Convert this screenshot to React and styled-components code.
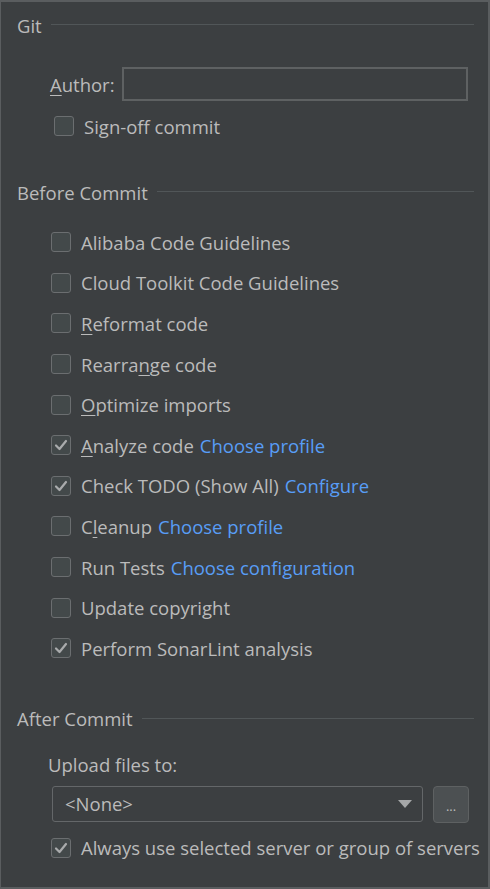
import React from 'react'
import styled, { createGlobalStyle } from 'styled-components'

const GlobalStyle = createGlobalStyle`
  html, body {
    margin: 0;
    padding: 0;
    background: #3c3f41;
  }
  * { box-sizing: border-box; }
`

const Frame = styled.div`
  width: 490px;
  height: 889px;
  background: #3c3f41;
  border: 1px solid #5a5d5f;
  border-top: 2px solid #5a5d5f;
  border-right: 2px solid #5a5d5f;
  border-bottom: 2px solid #5a5d5f;
  font-family: 'Open Sans', 'Noto Sans', sans-serif;
  font-size: 18.5px;
  color: #bbbbbb;
  display: flex;
  flex-direction: column;
  padding: 0 14px 0 16px;
`

const SectionTitle = styled.div`
  display: flex;
  align-items: center;
  gap: 9px;
  height: 24px;
  margin-top: ${p => p.top}px;
  &::after {
    content: '';
    flex: 1;
    height: 1px;
    background: #515658;
    margin-top: -1px;
  }
`

const Body = styled.div`
  display: flex;
  flex-direction: column;
  padding-left: ${p => p.indent}px;
  margin-top: ${p => p.top}px;
`

const FieldRow = styled.div`
  display: flex;
  align-items: center;
  gap: 7px;
  height: 34px;
`

const TextField = styled.div`
  flex: 1;
  height: 34px;
  border: 2px solid #5e6162;
  background: #3c3f41;
  margin-right: 6px;
`

const Row = styled.label`
  display: flex;
  align-items: center;
  height: ${p => p.h || 40.6}px;
  gap: 10px;
  white-space: nowrap;
`

const Box = styled.span`
  width: 20px;
  height: 20px;
  border: 1px solid #6b6e70;
  border-radius: 3px;
  background: #43494a;
  display: flex;
  align-items: center;
  justify-content: center;
  flex-shrink: 0;
`

const Mn = styled.span`
  text-decoration: underline;
  text-underline-offset: 3px;
`

const Link = styled.span`
  color: #589df6;
  margin-left: 6px;
`

const Label = styled.div`
  height: 24px;
  display: flex;
  align-items: center;
`

const ComboRow = styled.div`
  display: flex;
  gap: 10px;
  margin-top: 9px;
  padding-right: 5px;
`

const Combo = styled.div`
  flex: 1;
  height: 36px;
  border: 1px solid #646769;
  border-radius: 3px;
  display: flex;
  align-items: center;
  padding: 0 10px 0 12px;
  justify-content: space-between;
`

const Arrow = styled.span`
  width: 0;
  height: 0;
  border-left: 7px solid transparent;
  border-right: 7px solid transparent;
  border-top: 8px solid #a5a7a8;
`

const DotsButton = styled.div`
  width: 36px;
  height: 37px;
  border: 1px solid #5e6162;
  border-radius: 4px;
  background: #4c5052;
  display: flex;
  align-items: flex-end;
  justify-content: center;
  padding-bottom: 9px;
  font-size: 13px;
  line-height: 1;
`

function Check({ checked }) {
  return (
    <Box>
      {checked && (
        <svg width="14" height="12" viewBox="0 0 14 12">
          <path d="M2 6.5 L5.5 10 L12 2" fill="none" stroke="#a9abac" strokeWidth="2.2" strokeLinecap="round" strokeLinejoin="round" />
        </svg>
      )}
    </Box>
  )
}

const beforeCommit = [
  { text: 'Alibaba Code Guidelines' },
  { text: 'Cloud Toolkit Code Guidelines' },
  { text: <><Mn>R</Mn>eformat code</> },
  { text: <>Rearra<Mn>n</Mn>ge code</> },
  { text: <><Mn>O</Mn>ptimize imports</> },
  { text: <><Mn>A</Mn>nalyze code</>, link: 'Choose profile', checked: true },
  { text: 'Check TODO (Show All)', link: 'Configure', checked: true },
  { text: <>C<Mn>l</Mn>eanup</>, link: 'Choose profile' },
  { text: 'Run Tests', link: 'Choose configuration' },
  { text: 'Update copyright' },
  { text: 'Perform SonarLint analysis', checked: true },
]

export default function App() {
  return (
    <>
      <GlobalStyle />
      <Frame>
        <SectionTitle top={11}>Git</SectionTitle>
        <Body indent={33} top={30}>
          <FieldRow>
            <span><Mn>A</Mn>uthor:</span>
            <TextField />
          </FieldRow>
          <Row h={50} style={{ paddingLeft: 4 }}>
            <Check />
            <span>Si<Mn>g</Mn>n-off commit</span>
          </Row>
        </Body>

        <SectionTitle top={29}>Before Commit</SectionTitle>
        <Body indent={34} top={18}>
          {beforeCommit.map((item, i) => (
            <Row key={i}>
              <Check checked={item.checked} />
              <span>{item.text}{item.link && <Link>{item.link}</Link>}</span>
            </Row>
          ))}
        </Body>

        <SectionTitle top={38}>After Commit</SectionTitle>
        <Body indent={31} top={22}>
          <Label>Upload files to:</Label>
          <ComboRow>
            <Combo style={{ marginLeft: 4 }}>
              <span>&lt;None&gt;</span>
              <Arrow />
            </Combo>
            <DotsButton>...</DotsButton>
          </ComboRow>
          <Row h={50} style={{ paddingLeft: 3 }}>
            <Check checked />
            <span>Always use selected server or group of servers</span>
          </Row>
        </Body>
      </Frame>
    </>
  )
}
